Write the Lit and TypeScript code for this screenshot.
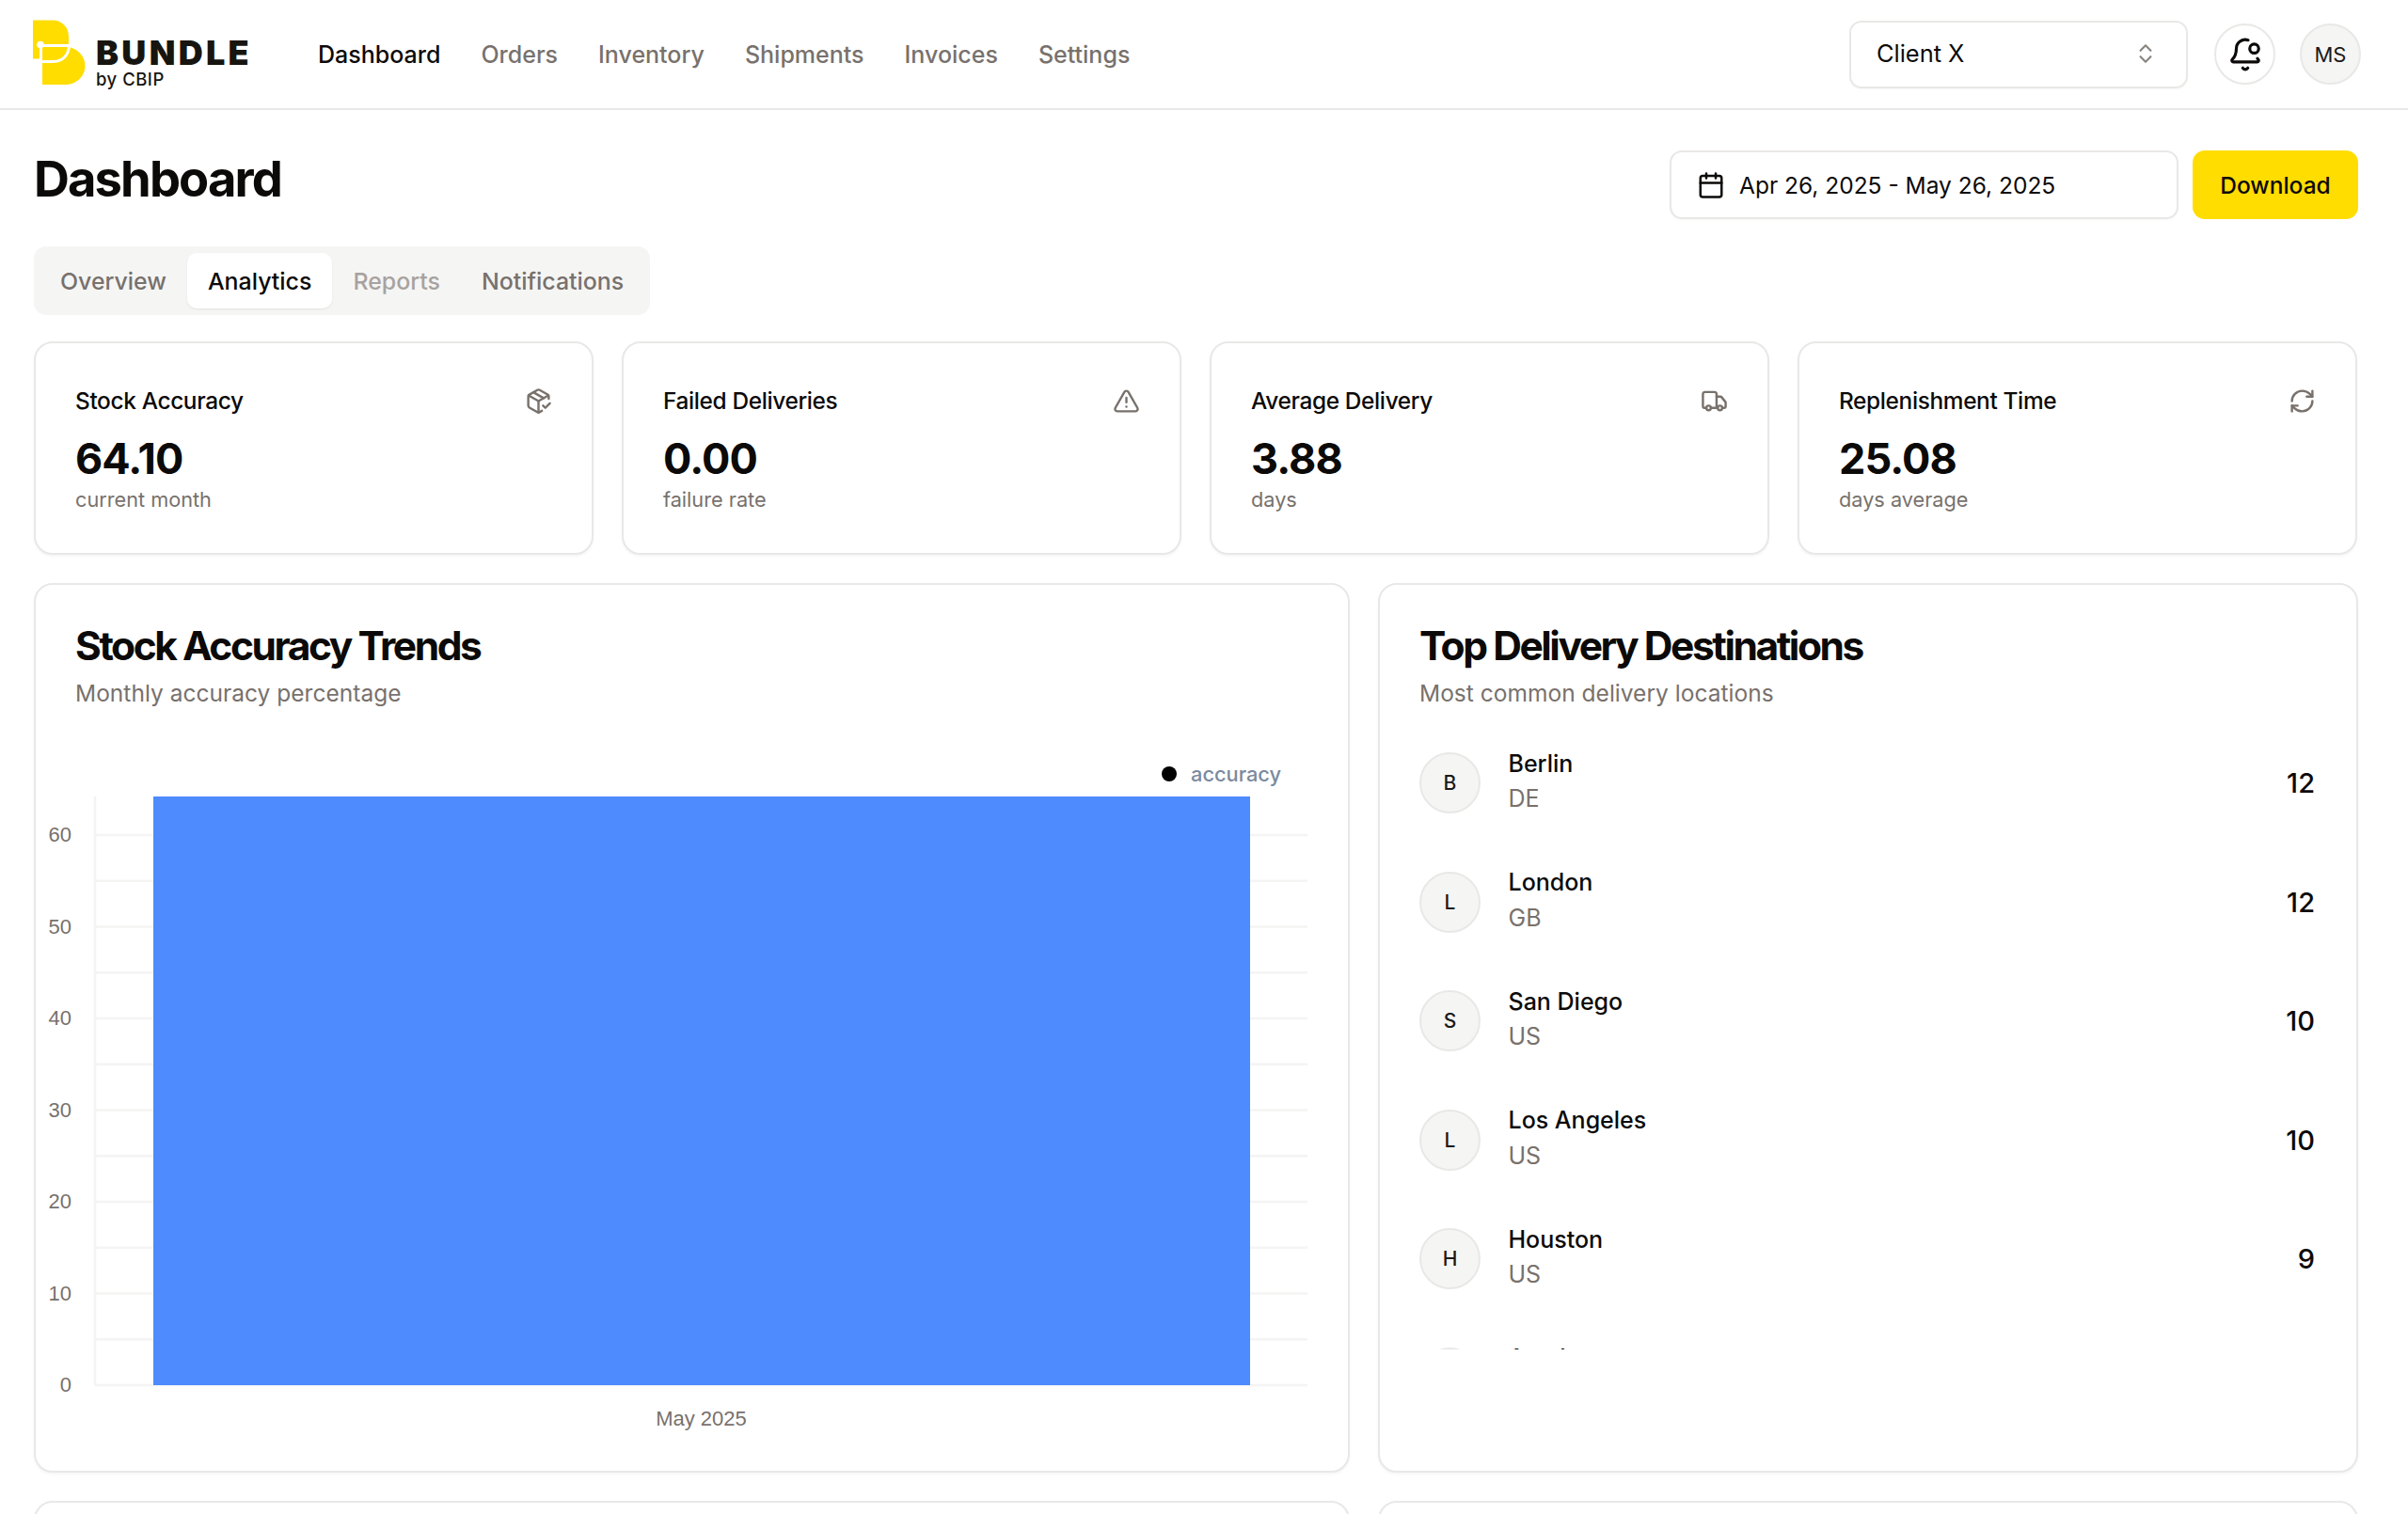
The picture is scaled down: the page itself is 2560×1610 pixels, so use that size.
import { LitElement, html, css, svg } from "lit";
import { customElement } from "lit/decorators.js";

const ic = (size: number, body: unknown, cls = "") => html`<svg class=${cls} width=${size} height=${size} viewBox="0 0 24 24" fill="none" stroke="currentColor" stroke-width="2" stroke-linecap="round" stroke-linejoin="round">${body}</svg>`;

const ICONS = {
  pkg: svg`<path d="m16 16 2 2 4-4"/><path d="M21 10V8a2 2 0 0 0-1-1.73l-7-4a2 2 0 0 0-2 0l-7 4A2 2 0 0 0 3 8v8a2 2 0 0 0 1 1.73l7 4a2 2 0 0 0 2 0l2-1.14"/><path d="m7.5 4.27 9 5.15"/><path d="M3.29 7 12 12l8.71-5"/><path d="M12 22V12"/>`,
  alert: svg`<path d="m21.73 18-8-14a2 2 0 0 0-3.48 0l-8 14A2 2 0 0 0 4 21h16a2 2 0 0 0 1.73-3"/><path d="M12 9v4"/><path d="M12 17h.01"/>`,
  truck: svg`<path d="M14 18V6a2 2 0 0 0-2-2H4a2 2 0 0 0-2 2v11a1 1 0 0 0 1 1h2"/><path d="M15 18H9"/><path d="M19 18h2a1 1 0 0 0 1-1v-3.65a1 1 0 0 0-.22-.624l-3.48-4.35A1 1 0 0 0 17.52 8H14"/><circle cx="17" cy="18" r="2"/><circle cx="7" cy="18" r="2"/>`,
  refresh: svg`<path d="M3 12a9 9 0 0 1 9-9 9.75 9.75 0 0 1 6.74 2.74L21 8"/><path d="M21 3v5h-5"/><path d="M21 12a9 9 0 0 1-9 9 9.75 9.75 0 0 1-6.74-2.74L3 16"/><path d="M8 16H3v5"/>`,
  calendar: svg`<path d="M8 2v4"/><path d="M16 2v4"/><rect width="18" height="18" x="3" y="4" rx="2"/><path d="M3 10h18"/>`,
  chevrons: svg`<path d="m7 15 5 5 5-5"/><path d="m7 9 5-5 5 5"/>`,
  bell: svg`<path d="M10.268 21a2 2 0 0 0 3.464 0"/><path d="M13.916 2.314A6 6 0 0 0 6 8c0 4.499-1.411 5.956-2.74 7.327A1 1 0 0 0 4 17h16a1 1 0 0 0 .74-1.673 9 9 0 0 1-.585-.665"/><circle cx="18" cy="8" r="3"/>`,
};

const KPIS = [
  { t: "Stock Accuracy", v: "64.10", s: "current month", i: ICONS.pkg },
  { t: "Failed Deliveries", v: "0.00", s: "failure rate", i: ICONS.alert },
  { t: "Average Delivery", v: "3.88", s: "days", i: ICONS.truck },
  { t: "Replenishment Time", v: "25.08", s: "days average", i: ICONS.refresh },
];
const DESTS = [
  { l: "B", n: "Berlin", c: "DE", v: 12 },
  { l: "L", n: "London", c: "GB", v: 12 },
  { l: "S", n: "San Diego", c: "US", v: 10 },
  { l: "L", n: "Los Angeles", c: "US", v: 10 },
  { l: "H", n: "Houston", c: "US", v: 9 },
  { l: "A", n: "Austin", c: "US", v: 9 },
];

@customElement("app-root")
export class AppRoot extends LitElement {
  static styles = css`
    :host { display: block; width: 2560px; height: 1610px; overflow: hidden; background: #fff; color: #0c0a09;
      font-family: Inter, "Liberation Sans", sans-serif; font-size: 24.8px; }
    * { box-sizing: border-box; }
    header { height: 117px; border-bottom: 2px solid #e9e8e6; display: flex; align-items: center; padding: 0 50px 0 35px; }
    .logo { display: flex; align-items: flex-start; width: 304px; height: 115px; flex: none; }
    .logo-mark { flex: none; margin-top: 21px; }
    .wordmark { margin: 40px 0 0 11px; display: flex; flex-direction: column; }
    .wordmark b { font-size: 36px; font-weight: 900; line-height: 32px; letter-spacing: 3.3px; color: #17150f; }
    .wordmark span { font-size: 18.5px; font-weight: 500; line-height: 24px; letter-spacing: .5px; color: #17150f; }
    nav { display: flex; gap: 43px; font-weight: 500; color: #78716c; font-size: 25px; margin-left: -1px; }
    nav .on { color: #0c0a09; }
    .right { margin-left: auto; display: flex; align-items: center; }
    .select { width: 360px; height: 72px; border: 2px solid #e9e8e6; border-radius: 13px; display: flex; align-items: center;
      justify-content: space-between; padding: 0 30px 2px 27px; font-size: 25.4px; box-shadow: 0 1px 2px rgba(0,0,0,.04); margin-right: 28px; }
    .select svg { color: #8a8580; }
    .round { width: 65px; height: 65px; border-radius: 50%; border: 2px solid #e9e8e6; display: flex; align-items: center; justify-content: center; }
    .bell { margin-right: 26px; }
    .avatar { background: #f5f5f4; font-size: 22px; font-weight: 400; color: #1c1917; }
    main { padding: 0 53px 0 36px; }
    .head { display: flex; align-items: flex-start; justify-content: space-between; padding-top: 43px; height: 145px; }
    h1 { margin: -1px 0 0; font-size: 52.5px; font-weight: 700; line-height: 63px; letter-spacing: -1.9px; }
    .actions { display: flex; gap: 15px; }
    .date { width: 541px; height: 73px; border: 2px solid #e9e8e6; border-radius: 13px; display: flex; align-items: center; gap: 15px; padding-left: 27px;
      font-weight: 400; font-size: 24.5px; box-shadow: 0 1px 2px rgba(0,0,0,.04); }
    .download { width: 176px; height: 73px; border-radius: 13px; background: #ffdd00; display: flex; align-items: center; justify-content: center; font-weight: 500; font-size: 24.5px; }
    .tabs-row { height: 101px; }
    .tabs { display: inline-flex; height: 73px; background: #f5f5f4; border-radius: 13px; padding: 7px 6px; font-weight: 500; font-size: 24.9px; color: #78716c; vertical-align: top; }
    .tab { padding: 0 22px; display: flex; align-items: center; border-radius: 10px; }
    .tab.on { background: #fff; color: #0c0a09; box-shadow: 0 1px 2px rgba(0,0,0,.08); }
    .tab.off { color: #a8a29e; }
    .kpis { display: grid; grid-template-columns: repeat(4, 595px); gap: 30px; }
    .card { border: 2px solid #e9e8e6; border-radius: 20px; background: #fff; box-shadow: 0 2px 3px rgba(0,0,0,.04); }
    .kpi { height: 227px; padding: 42px 42px 0 42px; display: flex; flex-direction: column; }
    .kpi-top { display: flex; justify-content: space-between; align-items: center; height: 38px; font-weight: 500; font-size: 24.4px; letter-spacing: -.35px; }
    .kpi-top svg { color: #78716c; }
    .kpi-v { font-size: 45px; font-weight: 700; line-height: 54px; margin-top: 16px; letter-spacing: -.9px; }
    .kpi-s { font-size: 21.7px; color: #78716c; line-height: 32px; }
    .grid2 { display: grid; grid-template-columns: 1399px 1042px; gap: 30px; margin-top: 30px; }
    .tall { height: 946px; }
    .ch { padding: 40px 42px 0; }
    h3 { margin: 0; font-size: 42.5px; font-weight: 700; line-height: 50px; letter-spacing: -2.45px; }
    .sub { color: #78716c; font-size: 24.5px; line-height: 32px; margin-top: 9px; letter-spacing: .02px; }
    .chart { display: block; margin-top: 27px; }
    .chart text { font-family: "Liberation Sans", Arial, sans-serif; font-size: 22px; fill: #78716c; }
    .chart text.legend { font-family: Inter, sans-serif; font-size: 21.8px; font-weight: 500; fill: #7a8aa0; }
    .list { margin-top: 42px; height: 640px; overflow: hidden; display: flex; flex-direction: column; gap: 51.5px; padding: 0 44px 0 42px; }
    .row { height: 75px; flex: none; display: flex; align-items: center; }
    .ltr { width: 65px; height: 65px; flex: none; border-radius: 50%; border: 2px solid #e9e8e6; background: #f5f5f4; display: flex; align-items: center; justify-content: center; font-size: 21px; font-weight: 500; color: #1c1917; }
    .who { margin: -3px 0 0 29.5px; display: flex; flex-direction: column; flex: 1; }
    .who b { font-weight: 500; font-size: 25px; line-height: 37.5px; }
    .who span { color: #78716c; font-size: 25px; line-height: 37.5px; }
    .num { font-size: 29px; font-weight: 500; }
    .more { height: 100px; }
  `;

  private chart() {
    const x0 = 101, x1 = 1390, base = 1473, unit = 9.75, top = 847;
    const lines = Array.from({ length: 13 }, (_, i) => i * 5);
    const ticks = [0, 10, 20, 30, 40, 50, 60];
    return html`<svg class="chart" width="1395" height="760" viewBox="38 780 1395 760">
      ${lines.map((v) => svg`<line x1=${x0} x2=${x1} y1=${base - v * unit} y2=${base - v * unit} stroke="#f4f4f3" stroke-width="2.5"/>`)}
      <line x1=${x0} x2=${x0} y1=${top} y2=${base} stroke="#f4f4f3" stroke-width="2.5"/>
      <rect x="163" y=${top} width="1166" height=${base - top} fill="#4d8bff"/>
      ${ticks.map((v) => svg`<text x="76" y=${base - v * unit + 7} text-anchor="end">${v}</text>`)}
      <text x="745.5" y="1516" text-anchor="middle">May 2025</text>
      <circle cx="1243" cy="823" r="8" fill="#000"/>
      <text class="legend" x="1266" y="831">accuracy</text>
    </svg>`;
  }

  render() {
    return html`
      <header>
        <div class="logo">
          <svg class="logo-mark" width="56" height="70" viewBox="35 21 56 70">
            <path d="M35 21.5H56C66 21.5 73 29 73 39V50C83 52 90.5 60 90.5 70C90.5 81 81 90 70 90H45V62.5H35Z" fill="#ffdd00"/>
            <path d="M43.5 66V48.5H73.5C73 58 67 65.5 57 65.5H43.5" fill="none" stroke="#fff" stroke-width="3"/>
            <circle cx="43" cy="47.5" r="3.8" fill="#fff"/>
          </svg>
          <div class="wordmark"><b>BUNDLE</b><span>by CBIP</span></div>
        </div>
        <nav>
          <span class="on">Dashboard</span><span>Orders</span><span>Inventory</span><span>Shipments</span><span>Invoices</span><span>Settings</span>
        </nav>
        <div class="right">
          <div class="select"><span>Client X</span>${ic(26, ICONS.chevrons)}</div>
          <div class="round bell">${ic(38, ICONS.bell)}</div>
          <div class="round avatar">MS</div>
        </div>
      </header>
      <main>
        <div class="head">
          <h1>Dashboard</h1>
          <div class="actions">
            <div class="date">${ic(30, ICONS.calendar)}<span>Apr 26, 2025 - May 26, 2025</span></div>
            <div class="download">Download</div>
          </div>
        </div>
        <div class="tabs-row">
          <div class="tabs">
            <div class="tab">Overview</div><div class="tab on">Analytics</div><div class="tab off">Reports</div><div class="tab">Notifications</div>
          </div>
        </div>
        <div class="kpis">
          ${KPIS.map((k) => html`<div class="card kpi">
            <div class="kpi-top"><span>${k.t}</span>${ic(29, k.i)}</div>
            <div class="kpi-v">${k.v}</div>
            <div class="kpi-s">${k.s}</div>
          </div>`)}
        </div>
        <div class="grid2">
          <div class="card tall">
            <div class="ch"><h3>Stock Accuracy Trends</h3><div class="sub">Monthly accuracy percentage</div></div>
            ${this.chart()}
          </div>
          <div class="card tall">
            <div class="ch"><h3>Top Delivery Destinations</h3><div class="sub">Most common delivery locations</div></div>
            <div class="list">
              ${DESTS.map((d) => html`<div class="row">
                <div class="ltr">${d.l}</div>
                <div class="who"><b>${d.n}</b><span>${d.c}</span></div>
                <div class="num">${d.v}</div>
              </div>`)}
            </div>
          </div>
          <div class="card more"></div>
          <div class="card more"></div>
        </div>
      </main>
    `;
  }
}
